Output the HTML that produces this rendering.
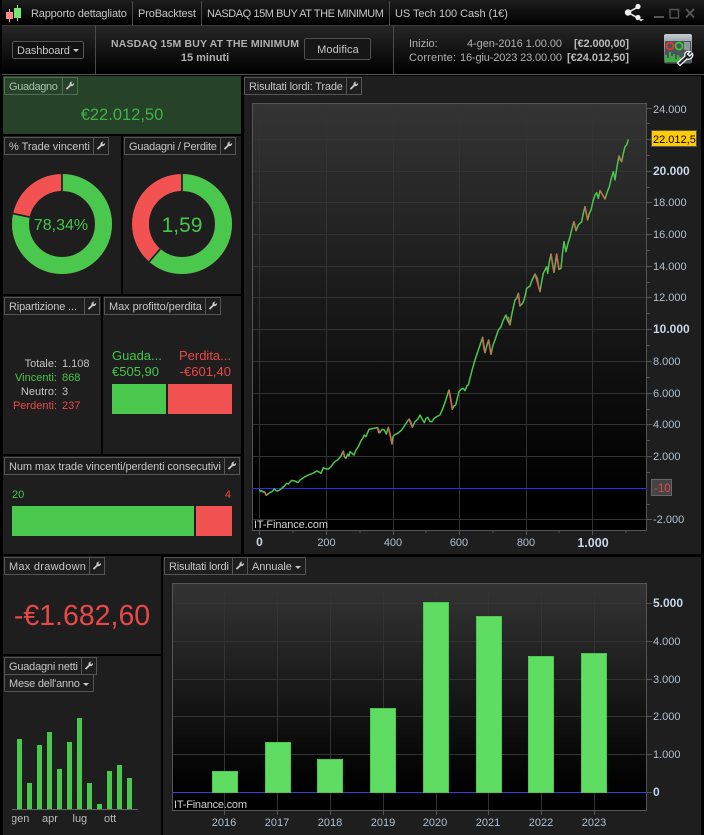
<!DOCTYPE html>
<html><head><meta charset="utf-8"><style>
html,body{margin:0;padding:0;background:#000;width:704px;height:835px;overflow:hidden}
svg{display:block}
text{font-family:"Liberation Sans",Arial,sans-serif;font-size:11px;fill:#c4c4c4}
.t{fill:#c6c6c6;font-size:11px;letter-spacing:.1px}
.ax{fill:#b0c0d2;font-size:11px}
.axb{fill:#c6d6e8;font-size:12px;font-weight:bold}
.box{fill:none;stroke:#555;stroke-width:1}
.grid{stroke:#333;stroke-width:1}
.tick{stroke:#555;stroke-width:1}
.c{fill:none;stroke-width:1.5;vector-effect:non-scaling-stroke;stroke-linejoin:round}
.bar{fill:#5fdc62;stroke:#4ac74d;stroke-width:1}
.g{fill:#4ac74d}.r{fill:#f25252}
.gt{fill:#46c64a}.rt{fill:#ea4848}
</style></head><body>
<svg width="704" height="835" viewBox="0 0 704 835" xmlns="http://www.w3.org/2000/svg">
<defs>
<linearGradient id="top" x1="0" y1="0" x2="0" y2="1"><stop offset="0" stop-color="#1e1e1e"/><stop offset="1" stop-color="#000"/></linearGradient>
<linearGradient id="head" x1="0" y1="0" x2="0" y2="1"><stop offset="0" stop-color="#262626"/><stop offset="1" stop-color="#000"/></linearGradient>
<linearGradient id="plot" x1="0" y1="0" x2="0" y2="1"><stop offset="0" stop-color="#343434"/><stop offset=".9" stop-color="#000"/><stop offset="1" stop-color="#000"/></linearGradient>
<linearGradient id="ico" x1="0" y1="0" x2="0" y2="1"><stop offset="0" stop-color="#c4cdd2"/><stop offset=".3" stop-color="#98a2a8"/><stop offset="1" stop-color="#555d60"/></linearGradient>
<symbol id="w" viewBox="0 0 12 12"><path d="M1 9.6 L5.4 5.2 C5 3 6.6 1 9.2 1.2 L7.4 3 L8.9 4.6 L10.9 2.8 C11.3 5.4 9.2 7.2 6.9 6.7 L2.5 11.1 Z" fill="#c8c8c8"/></symbol>
</defs>

<!-- top bar -->
<rect x="2" y="0" width="702" height="25" fill="url(#top)"/>
<rect x="2" y="25" width="702" height="1" fill="#3a3a3a"/>
<rect x="2" y="26" width="702" height="48" fill="url(#head)"/>
<rect x="2" y="74" width="702" height="1" fill="#555"/>
<path d="M132.500 1V25M201.500 1V25M389.500 1V25M95.500 26V74M393.500 26V74" stroke="#4a4a4a"/>
<path d="M9.500 9V22" stroke="#ff9a9a"/><rect x="6" y="12" width="7" height="7" fill="#ff8a8a"/>
<path d="M17.500 5V21" stroke="#7fe87f"/><rect x="14" y="8" width="7" height="10" fill="#74e874"/>
<text x="31" y="17" class="t" textLength="96">Rapporto dettagliato</text>
<text x="138" y="17" class="t" textLength="58">ProBacktest</text>
<text x="207" y="17" class="t" textLength="177">NASDAQ 15M BUY AT THE MINIMUM</text>
<text x="395" y="17" class="t" textLength="113">US Tech 100 Cash (1€)</text>

<!-- share + window -->
<path d="M628 12.500L638 7M628 12.500L638 18" stroke="#e4e4e4" stroke-width="1.6"/>
<circle cx="628" cy="12.500" r="3.200" fill="#eee"/><circle cx="638" cy="6.500" r="2.600" fill="#eee"/><circle cx="638" cy="17.500" r="2.600" fill="#eee"/>
<path d="M638 19h6l-3 2.500z" fill="#ccc"/>
<rect x="654" y="16" width="10" height="2" fill="#555"/>
<rect x="670" y="9.500" width="8.500" height="8.500" fill="none" stroke="#555" stroke-width="1.400"/>
<path d="M686 9L694 17.500M694 9L686 17.500" stroke="#555" stroke-width="2"/>

<!-- header row -->
<rect x="12.500" y="41.500" width="71" height="17" rx="2" fill="#111" stroke="#555"/>
<text x="17" y="54" class="t" textLength="53">Dashboard</text>
<path d="M73 49h6l-3 3z" fill="#ccc"/>
<text x="111" y="47" style="font-weight:bold;font-size:10.5px;fill:#b0b0b0" textLength="188">NASDAQ 15M BUY AT THE MINIMUM</text>
<text x="205" y="61" text-anchor="middle" style="font-weight:bold;font-size:11px;fill:#b0b0b0">15 minuti</text>
<rect x="304.500" y="38.500" width="66" height="21" rx="2" fill="#161616" stroke="#505050"/>
<text x="338" y="53" text-anchor="middle" class="t">Modifica</text>
<text x="409" y="47" style="fill:#b0b0b0">Inizio:</text>
<text x="409" y="61" style="fill:#b0b0b0" textLength="47">Corrente:</text>
<text x="467" y="47" style="fill:#b0b0b0" textLength="95">4-gen-2016 1.00.00</text>
<text x="460" y="61" style="fill:#b0b0b0" textLength="102">16-giu-2023 23.00.00</text>
<text x="574" y="47" style="font-weight:bold;fill:#b8b8b8" textLength="55">[€2.000,00]</text>
<text x="567" y="61" style="font-weight:bold;fill:#b8b8b8" textLength="62">[€24.012,50]</text>

<!-- strategy icon -->
<rect x="664" y="34" width="28" height="29.500" rx="2" fill="url(#ico)"/>
<rect x="665" y="41" width="26" height="21.500" fill="#4a5558"/>
<circle cx="670" cy="46" r="3.500" fill="none" stroke="#e33" stroke-width="1.700"/>
<circle cx="679" cy="46" r="3.500" fill="none" stroke="#3c3" stroke-width="1.700"/>
<path d="M684 43h6M684 45h6M684 47h6M684 49h6" stroke="#d8d8d8"/>
<path d="M666 62V55M668 62V58M670 62V52M672 62V56M674 62V54M676 62V59M678 62V55M680 62V57" stroke="#3fcf3f" stroke-width="1.400"/>
<path d="M677.500 63 L685 56 C684 53 686.500 50.500 690 51.500 L687.500 54 L689.500 56 L692.500 53.500 C693.500 57 690.500 60 687 59 L680 65.500 Z" fill="#222" stroke="#f2f2f2" stroke-width="1.300"/>

<!-- Guadagno -->
<rect x="3" y="76" width="238" height="58" fill="#26432a"/>
<rect x="4.500" y="77.500" width="58" height="17" fill="none" stroke="#4f6f53"/>
<rect x="62.500" y="77.500" width="15" height="17" fill="none" stroke="#4f6f53"/>
<text x="9" y="90" class="t" style="fill:#a8c0aa" textLength="49">Guadagno</text>
<use href="#w" x="65" y="80" width="10" height="11"/>
<text x="122" y="120" text-anchor="middle" style="font-size:16.500px;fill:#3fb344">€22.012,50</text>

<!-- % Trade -->
<rect x="3" y="136" width="118" height="158" fill="#1e1e1e"/>
<rect x="4.500" y="137.500" width="89" height="17" class="box"/><rect x="93.500" y="137.500" width="15" height="17" class="box"/>
<text x="9" y="150" class="t" textLength="81">% Trade vincenti</text><use href="#w" x="96" y="140" width="10" height="11"/>
<circle cx="62" cy="224" r="41.500" fill="none" stroke="#f25252" stroke-width="17"/>
<circle cx="62" cy="224" r="41.500" fill="none" stroke="#4ac74d" stroke-width="17" stroke-dasharray="204.270 300" transform="rotate(-90 62 224)"/>
<path d="M62 174V191M13 213.600L29.700 217.100" stroke="#1e1e1e" stroke-width="1.700"/>
<text x="61" y="230" text-anchor="middle" class="gt" style="font-size:16px">78,34%</text>

<!-- Guadagni / Perdite -->
<rect x="123" y="136" width="118" height="158" fill="#1e1e1e"/>
<rect x="124.500" y="137.500" width="96" height="17" class="box"/><rect x="220.500" y="137.500" width="15" height="17" class="box"/>
<text x="129" y="150" class="t" textLength="88">Guadagni / Perdite</text><use href="#w" x="223" y="140" width="10" height="11"/>
<circle cx="182" cy="224" r="41.500" fill="none" stroke="#f25252" stroke-width="17"/>
<circle cx="182" cy="224" r="41.500" fill="none" stroke="#4ac74d" stroke-width="17" stroke-dasharray="160.100 300" transform="rotate(-90 182 224)"/>
<path d="M182 174V191M149.200 261.700L160.300 248.900" stroke="#1e1e1e" stroke-width="1.700"/>
<text x="182" y="232" text-anchor="middle" class="gt" style="font-size:21px">1,59</text>

<!-- Ripartizione -->
<rect x="3" y="296" width="98" height="158" fill="#1e1e1e"/>
<rect x="4.500" y="297.500" width="80" height="17" class="box"/><rect x="84.500" y="297.500" width="15" height="17" class="box"/>
<text x="9" y="310" class="t" textLength="68">Ripartizione ...</text><use href="#w" x="87" y="300" width="10" height="11"/>
<g>
<text x="57" y="367" text-anchor="end">Totale:</text><text x="62" y="367" >1.108</text>
<text x="57" y="381" text-anchor="end" class="gt">Vincenti:</text><text x="62" y="381" class="gt">868</text>
<text x="57" y="395" text-anchor="end">Neutro:</text><text x="62" y="395">3</text>
<text x="57" y="409" text-anchor="end" class="rt">Perdenti:</text><text x="62" y="409" class="rt">237</text>
</g>

<!-- Max profitto -->
<rect x="103" y="296" width="138" height="158" fill="#1e1e1e"/>
<rect x="104.500" y="297.500" width="101" height="17" class="box"/><rect x="205.500" y="297.500" width="15" height="17" class="box"/>
<text x="109" y="310" class="t" textLength="93">Max profitto/perdita</text><use href="#w" x="208" y="300" width="10" height="11"/>
<text x="112" y="360" class="gt" style="font-size:13px">Guada...</text>
<text x="112" y="376" class="gt" style="font-size:13px">€505,90</text>
<text x="231" y="360" text-anchor="end" class="rt" style="font-size:13px">Perdita...</text>
<text x="231" y="376" text-anchor="end" class="rt" style="font-size:13px">-€601,40</text>
<rect x="112" y="384" width="54" height="30" class="g"/><rect x="168" y="384" width="64" height="30" class="r"/>

<!-- Num max -->
<rect x="3" y="456" width="238" height="98" fill="#1e1e1e"/>
<rect x="4.500" y="457.500" width="220" height="17" class="box"/><rect x="224.500" y="457.500" width="15" height="17" class="box"/>
<text x="9" y="470" class="t" textLength="212">Num max trade vincenti/perdenti consecutivi</text><use href="#w" x="227" y="460" width="10" height="11"/>
<text x="12" y="498" class="gt">20</text><text x="231" y="498" text-anchor="end" class="rt">4</text>
<rect x="12" y="506" width="182" height="30" class="g"/><rect x="196" y="506" width="36" height="30" class="r"/>

<!-- Main chart panel -->
<rect x="244" y="76" width="457" height="478" fill="#1e1e1e"/>
<rect x="244.500" y="77.500" width="102" height="17" class="box"/><rect x="346.500" y="77.500" width="15" height="17" class="box"/>
<text x="249" y="90" class="t" textLength="94">Risultati lordi: Trade</text><use href="#w" x="349" y="80" width="10" height="11"/>
<rect x="252" y="103" width="394.500" height="427" fill="url(#plot)"/>
<path class="grid" d="M252 139.500H646M252 171.500H646M252 202.500H646M252 234.500H646M252 266.500H646M252 297.500H646M252 329.500H646M252 361.500H646M252 393.500H646M252 424.500H646M252 456.500H646M252 519.500H646M259.500 103V530M326.500 103V530M393.500 103V530M459.500 103V530M526.500 103V530M592.500 103V530"/>
<rect x="252.500" y="103.500" width="394" height="427" fill="none" stroke="#555"/>
<path d="M252 488.500H647" stroke="#2a2af0" stroke-width="1"/>
<path class="tick" d="M647 139.500h5M647 171.500h5M647 202.500h5M647 234.500h5M647 266.500h5M647 297.500h5M647 329.500h5M647 361.500h5M647 393.500h5M647 424.500h5M647 456.500h5M647 519.500h5M647 108.500h5M647 123.500h3M647 155.500h3M647 187.500h3M647 218.500h3M647 250.500h3M647 282.500h3M647 313.500h3M647 345.500h3M647 377.500h3M647 409.500h3M647 440.500h3M647 472.500h3M647 504.500h3M259.500 530v5M326.500 530v5M393.500 530v5M459.500 530v5M526.500 530v5M592.500 530v5M293 530v3M360 530v3M426 530v3M493 530v3M559 530v3M626 530v3"/>

<g transform="translate(245 320) scale(.33333)">
<polyline class="c" stroke="#4ac74d" points="43,508 46,514 50,512 54,516 58,515 64,526 70,521 75,518 82,514 88,507 93,512 97,513 103,511 110,505 118,498 125,490 130,492 140,481 150,483 155,486 160,487 165,480 170,477 180,470 190,465 200,461 208,458 215,453 222,456 228,460 235,443 243,447 250,447 258,440 265,430 272,423 280,418 288,408 295,393 299,412 303,415 308,402 312,408 315,395 321,400 327,405 333,390 340,380 348,362 353,355 358,345 363,350 372,328 385,325 398,323 401,338 405,338 411,328 418,330 424,342 430,322 436,345 441,372 444,350 448,345 458,340 470,330 480,315 492,297 497,305 502,322 510,305 518,298 525,285 532,298 538,308 543,295 548,292 555,305 560,305 568,295 575,290 585,285 595,262 603,238 612,210 617,235 622,268 627,258 632,255 637,235 642,215 648,208 655,205 660,212 666,197 670,195 680,155 690,120 700,90 713,52 717,88 720,98 726,75 731,60 735,85 738,103 744,75 750,60 760,30"/>
<path class="c" stroke="#f25252" d="M58 515L64 526M295 393L299 412M612 210L622 268M430 322L441 372M492 297L502 322M713 52L720 98M731 60L738 103M398 323L405 338"/>
</g>
<g transform="translate(450 100) scale(.33333)">
<polyline class="c" stroke="#4ac74d" points="145,690 152,682 160,660 165,650 168,645 172,660 175,665 180,675 185,645 190,622 195,600 200,595 205,580 208,605 210,618 218,610 222,600 226,585 230,565 240,558 245,543 255,522 262,535 266,560 270,575 275,545 280,520 285,510 290,500 293,520 298,485 303,462 308,495 312,517 316,490 320,462 324,490 327,508 333,505 337,465 342,425 348,455 354,430 360,410 366,385 372,365 378,392 385,375 395,365 400,340 405,320 410,345 413,360 418,340 423,330 430,300 435,285 440,278 445,295 450,272 458,285 465,297 472,275 478,260 484,235 490,215 495,240 501,200 507,168 511,180 515,185 520,160 525,140 530,135 535,118"/>
<path class="c" stroke="#f25252" d="M175 650L180 675M205 580L210 618M255 522L270 575M303 462L312 517M320 462L327 508M372 365L378 392M405 320L413 360M450 272L465 297M507 168L515 185"/>
</g>

<text x="254" y="528" style="font-size:11px;fill:#d0d0d0" textLength="74">IT-Finance.com</text>
<text x="653" y="113" class="ax">24.000</text>
<text x="653" y="175" class="axb">20.000</text>
<text x="653" y="206" class="ax">18.000</text>
<text x="653" y="238" class="ax">16.000</text>
<text x="653" y="270" class="ax">14.000</text>
<text x="653" y="301" class="ax">12.000</text>
<text x="653" y="333" class="axb">10.000</text>
<text x="653" y="365" class="ax">8.000</text>
<text x="653" y="397" class="ax">6.000</text>
<text x="653" y="428" class="ax">4.000</text>
<text x="653" y="460" class="ax">2.000</text>
<text x="653" y="523" class="ax">-2.000</text>
<rect x="651.500" y="130.500" width="45" height="16" fill="#ffcb05" stroke="#555"/>
<text x="653" y="143" style="font-size:11px;fill:#000">22.012,5</text>
<rect x="651.500" y="479.500" width="20" height="16" fill="#444" stroke="#666"/>
<text x="654" y="492" style="font-size:11.500px;fill:#e24a4a">-10</text>
<text x="259.500" y="546" text-anchor="middle" class="axb">0</text>
<text x="326.500" y="546" text-anchor="middle" class="ax">200</text>
<text x="393" y="546" text-anchor="middle" class="ax">400</text>
<text x="459" y="546" text-anchor="middle" class="ax">600</text>
<text x="526" y="546" text-anchor="middle" class="ax">800</text>
<text x="593" y="547" text-anchor="middle" class="axb" style="font-size:12.500px">1.000</text>

<!-- Max drawdown -->
<rect x="3" y="556" width="158" height="98" fill="#1e1e1e"/>
<rect x="4.500" y="557.500" width="85" height="17" class="box"/><rect x="89.500" y="557.500" width="15" height="17" class="box"/>
<text x="9" y="570" class="t" textLength="77">Max drawdown</text><use href="#w" x="92" y="560" width="10" height="11"/>
<text x="82" y="625" text-anchor="middle" style="font-size:28.500px;fill:#ea4848">-€1.682,60</text>

<!-- Guadagni netti -->
<rect x="3" y="656" width="158" height="179" fill="#1e1e1e"/>
<rect x="4.500" y="657.500" width="77" height="17" class="box"/><rect x="81.500" y="657.500" width="15" height="17" class="box"/>
<text x="9" y="670" class="t" textLength="69">Guadagni netti</text><use href="#w" x="84" y="660" width="10" height="11"/>
<rect x="4.500" y="674.500" width="89" height="17" rx="1" class="box"/>
<text x="9" y="687" class="t" textLength="71">Mese dell'anno</text><path d="M83 683h6l-3 3z" fill="#ccc"/>
<g class="g">
<rect x="17" y="739" width="5" height="70"/><rect x="27" y="783" width="5" height="26"/><rect x="37" y="745" width="5" height="64"/><rect x="47" y="732" width="5" height="77"/><rect x="57" y="769" width="5" height="40"/><rect x="67" y="742" width="5" height="67"/><rect x="77" y="718" width="5" height="91"/><rect x="87" y="783" width="5" height="26"/><rect x="97" y="804" width="5" height="5"/><rect x="107" y="771" width="5" height="38"/><rect x="117" y="765" width="5" height="44"/><rect x="127" y="778" width="5" height="31"/>
</g>
<path d="M12 809.500H138" stroke="#666"/>
<text x="11" y="822" class="ax" style="fill:#bbb">gen</text>
<rect x="3" y="812" width="9" height="14" fill="#1e1e1e"/>
<text x="42" y="822" class="ax" style="fill:#bbb">apr</text>
<text x="72.500" y="822" class="ax" style="fill:#bbb">lug</text>
<text x="104" y="822" class="ax" style="fill:#bbb">ott</text>

<!-- Bottom chart -->
<rect x="163" y="557" width="538" height="278" fill="#1e1e1e"/>
<rect x="164.500" y="557.500" width="68" height="17" class="box"/><rect x="232.500" y="557.500" width="15" height="17" class="box"/><rect x="247.500" y="557.500" width="58" height="17" rx="1" class="box"/>
<text x="169" y="570" class="t" textLength="60">Risultati lordi</text><use href="#w" x="235" y="560" width="10" height="11"/>
<text x="252" y="570" class="t" textLength="40">Annuale</text><path d="M295 566h6l-3 3z" fill="#ccc"/>
<rect x="172" y="583" width="474.500" height="227" fill="url(#plot)"/>
<path class="grid" d="M172 603.500H646M172 641.500H646M172 679.500H646M172 716.500H646M172 754.500H646M224.500 583V810M277.500 583V810M330.500 583V810M383.500 583V810M436.500 583V810M488.500 583V810M541.500 583V810M594.500 583V810"/>
<rect x="172.500" y="583.500" width="474" height="227" fill="none" stroke="#555"/>
<path d="M172 792.500H647" stroke="#3a3ae0"/>
<rect x="212.500" y="771.500" width="25" height="21" class="bar"/>
<rect x="265.500" y="742.500" width="25" height="50" class="bar"/>
<rect x="317.500" y="759.500" width="25" height="33" class="bar"/>
<rect x="370.500" y="708.500" width="25" height="84" class="bar"/>
<rect x="423.500" y="602.500" width="25" height="190" class="bar"/>
<rect x="476.500" y="616.500" width="25" height="176" class="bar"/>
<rect x="528.500" y="656.500" width="25" height="136" class="bar"/>
<rect x="581.500" y="653.500" width="25" height="139" class="bar"/>
<path class="tick" d="M647 603.500h5M647 641.500h5M647 679.500h5M647 716.500h5M647 754.500h5M647 792.500h5M224.500 810v5M277.500 810v5M330.500 810v5M383.500 810v5M436.500 810v5M488.500 810v5M541.500 810v5M594.500 810v5"/>
<text x="174" y="808" style="font-size:11px;fill:#d0d0d0" textLength="73">IT-Finance.com</text>
<text x="653" y="607" class="axb">5.000</text>
<text x="653" y="645" class="ax">4.000</text>
<text x="653" y="683" class="ax">3.000</text>
<text x="653" y="720" class="ax">2.000</text>
<text x="653" y="758" class="ax">1.000</text>
<text x="653" y="796" class="axb">0</text>
<text x="224" y="826" text-anchor="middle" class="ax">2016</text>
<text x="277" y="826" text-anchor="middle" class="ax">2017</text>
<text x="330" y="826" text-anchor="middle" class="ax">2018</text>
<text x="383" y="826" text-anchor="middle" class="ax">2019</text>
<text x="435" y="826" text-anchor="middle" class="ax">2020</text>
<text x="488" y="826" text-anchor="middle" class="ax">2021</text>
<text x="541" y="826" text-anchor="middle" class="ax">2022</text>
<text x="594" y="826" text-anchor="middle" class="ax">2023</text>
</svg>
</body></html>
